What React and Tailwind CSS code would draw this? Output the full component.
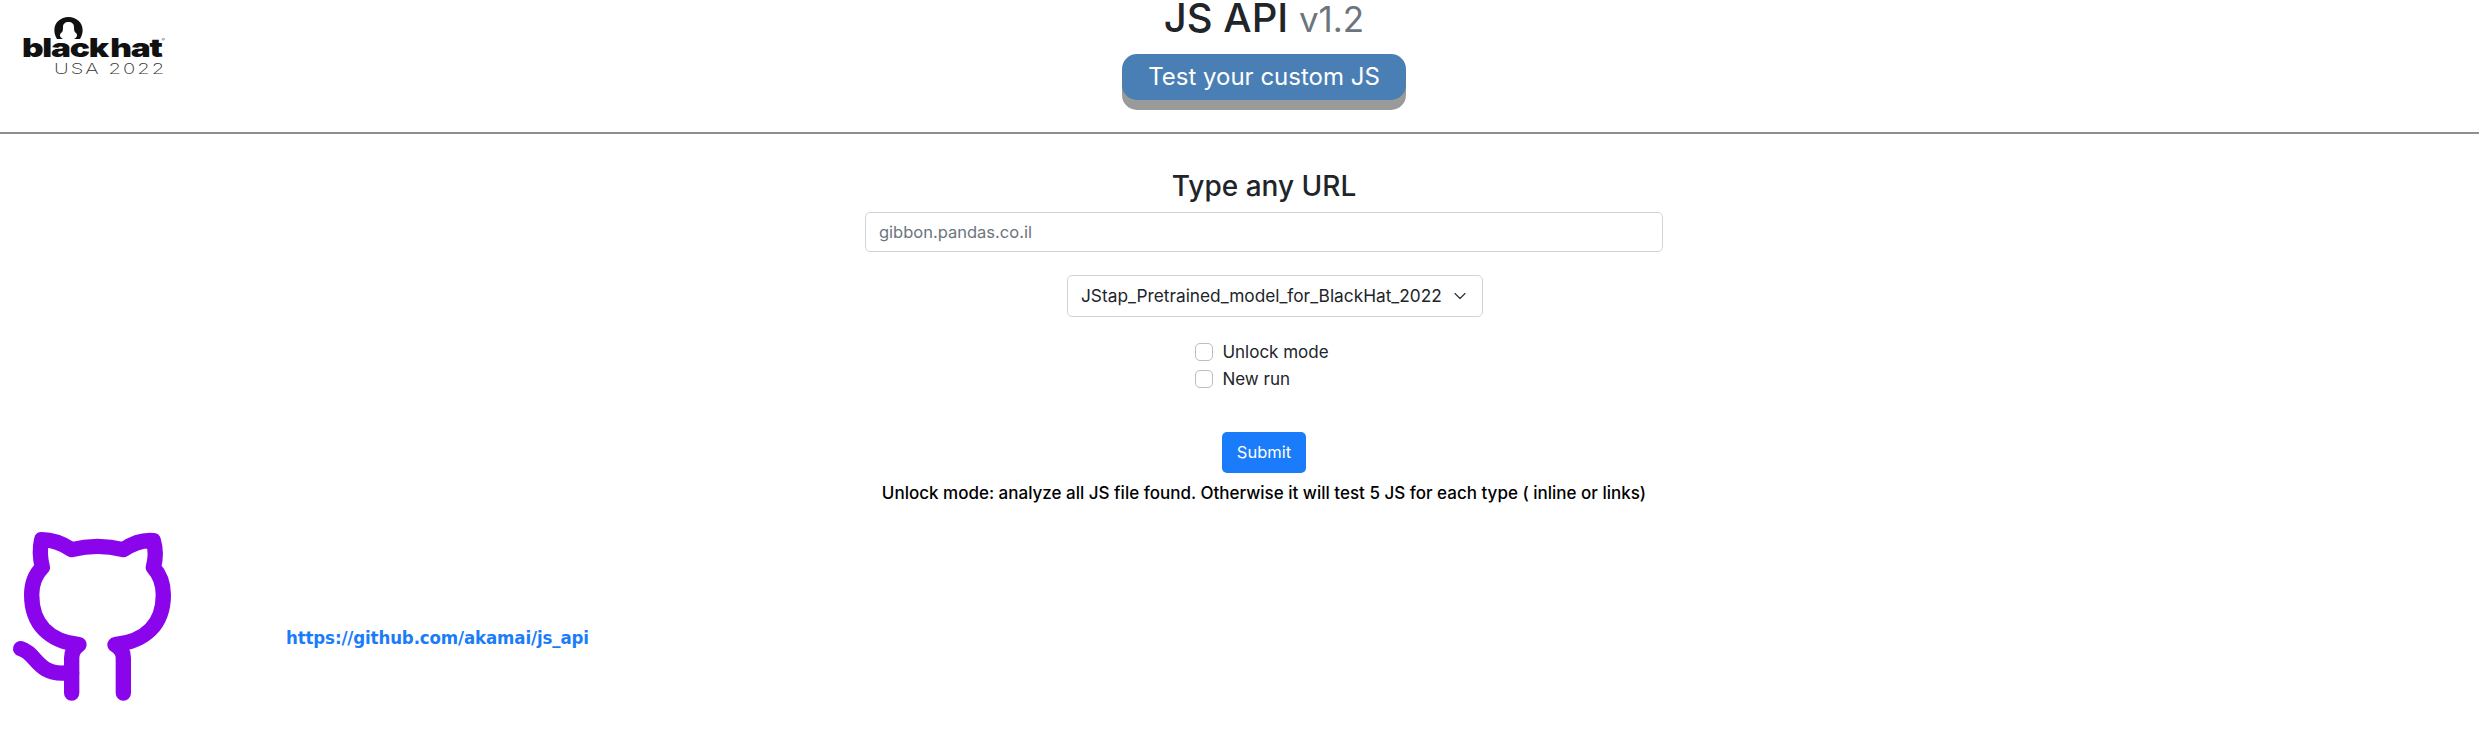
import { ChevronDown } from 'lucide-react';

function Logo() {
    return (
        <div className="pl-[22px] pt-[17px] w-[200px]">
            <svg width="31" height="22" viewBox="0 0 31 22" className="block ml-[31px]">
                <path d="M4 22C-3 10 5 0 15.500 0C26 0 34 10 27 22L21 22C24 20 25 18 23 16C21 15 21 12 21 10C21 7 19 5 15.500 5C12 5 10 7 10 10C10 12 10 15 8 16C6 18 7 20 10 22Z" fill="#111" />
            </svg>
            <div className="flex items-start h-[21px] -mt-[3px] origin-left scale-x-[1.290]">
                <span className="font-black text-[26px] leading-[24px] tracking-[-1px] text-[#111] whitespace-nowrap">black</span>
                <span className="font-black text-[26px] leading-[24px] tracking-[-1px] text-[#111] whitespace-nowrap ml-[2px]">hat</span>
                <span className="text-[4px] leading-[8px] text-[#555]">®</span>
            </div>
            <div className="ml-[32px] mt-[5px] font-extralight text-[15px] leading-[14px] tracking-[1.500px] text-[#333] whitespace-nowrap origin-left scale-x-[1.350]">USA 2022</div>
        </div>
    );
}

function GithubMark() {
    return (
        <svg width="200" height="190" viewBox="0 0 600 570" fill="none" stroke="#8a04ec" strokeWidth="46" strokeLinecap="round" strokeLinejoin="round" className="shrink-0">
            <path d="M215 525V420Q215 395 237 380C150 370 95 320 95 230C95 195 105 170 127 148C120 120 118 95 125 65C150 65 185 75 215 95C265 82 320 82 370 95C400 75 430 65 460 68C468 95 468 120 460 148C480 170 490 195 490 230C490 320 435 370 345 380Q370 395 370 420V525" />
            <path d="M62 392C110 405 110 470 195 465H215" />
        </svg>
    );
}

export default function App() {
    return (
        <div className="w-[2479px] h-[743px] overflow-hidden bg-white text-[#212529] font-['Inter',sans-serif]">
            <header className="grid grid-cols-[1080px_368px_1fr] h-[132px]">
                <Logo />
                <div className="flex flex-col items-center">
                    <h1 className="text-[40px] leading-[36px] font-medium whitespace-nowrap">
                        JS API <small className="text-[35px] font-normal text-[#6c757d]">v1.2</small>
                    </h1>
                    <button className="mt-[17px] w-[284px] h-[46px] rounded-[15px] bg-[#4a7fb5] text-white text-[24px] leading-[46px] shadow-[0_10px_0_#9a9a9a]">
                        Test your custom JS
                    </button>
                </div>
            </header>
            <hr className="border-0 h-[2px] bg-[#8f8f8f]" />

            <main className="pl-[49px] flex flex-col items-center">
                <h3 className="mt-[35px] text-[28px] leading-[34px] font-medium">Type any URL</h3>
                <input
                    type="text"
                    placeholder="gibbon.pandas.co.il"
                    className="mt-[9px] w-[798px] h-[40px] px-[13px] border border-[#ced4da] rounded-[5px] text-[16.500px] outline-none placeholder:text-[#6c757d]"
                />
                <div className="relative mt-[23px] ml-[22px] w-[416px] h-[42px]">
                    <select className="w-full h-full pl-[13px] pr-[36px] border border-[#ced4da] rounded-[5px] text-[17.300px] bg-white appearance-none outline-none">
                        <option>JStap_Pretrained_model_for_BlackHat_2022</option>
                    </select>
                    <ChevronDown className="absolute right-[13px] top-[11px] w-[20px] h-[20px] text-[#343a40] pointer-events-none" strokeWidth={1.500} />
                </div>

                <div className="mt-[23px] -ml-[4px] flex flex-col gap-[3px] text-[17px] leading-[24px]">
                    <label className="flex items-center gap-[9px]">
                        <input type="checkbox" className="appearance-none w-[18px] h-[18px] border border-[#bdbdbd] rounded-[5px] bg-white" />
                        Unlock mode
                    </label>
                    <label className="flex items-center gap-[9px]">
                        <input type="checkbox" className="appearance-none w-[18px] h-[18px] border border-[#bdbdbd] rounded-[5px] bg-white" />
                        New run
                    </label>
                </div>

                <button className="mt-[41px] w-[84px] h-[41px] rounded-[5px] bg-[#1a7cfa] text-white text-[16.500px]">Submit</button>
                <p className="mt-[8px] text-[17px] leading-[24px] font-medium text-black whitespace-nowrap">
                    Unlock mode: analyze all JS file found. Otherwise it will test 5 JS for each type ( inline or links)
                </p>
            </main>

            <div className="mt-[13px] flex items-center">
                <GithubMark />
                <a href="#" className="ml-[86px] mt-[49px] font-['DejaVu_Sans_Condensed','DejaVu_Sans',sans-serif] font-bold text-[18.500px] leading-[26px] tracking-[-0.140px] text-[#1a7cfa] whitespace-nowrap">
                    https://github.com/akamai/js_api
                </a>
            </div>
        </div>
    );
}
